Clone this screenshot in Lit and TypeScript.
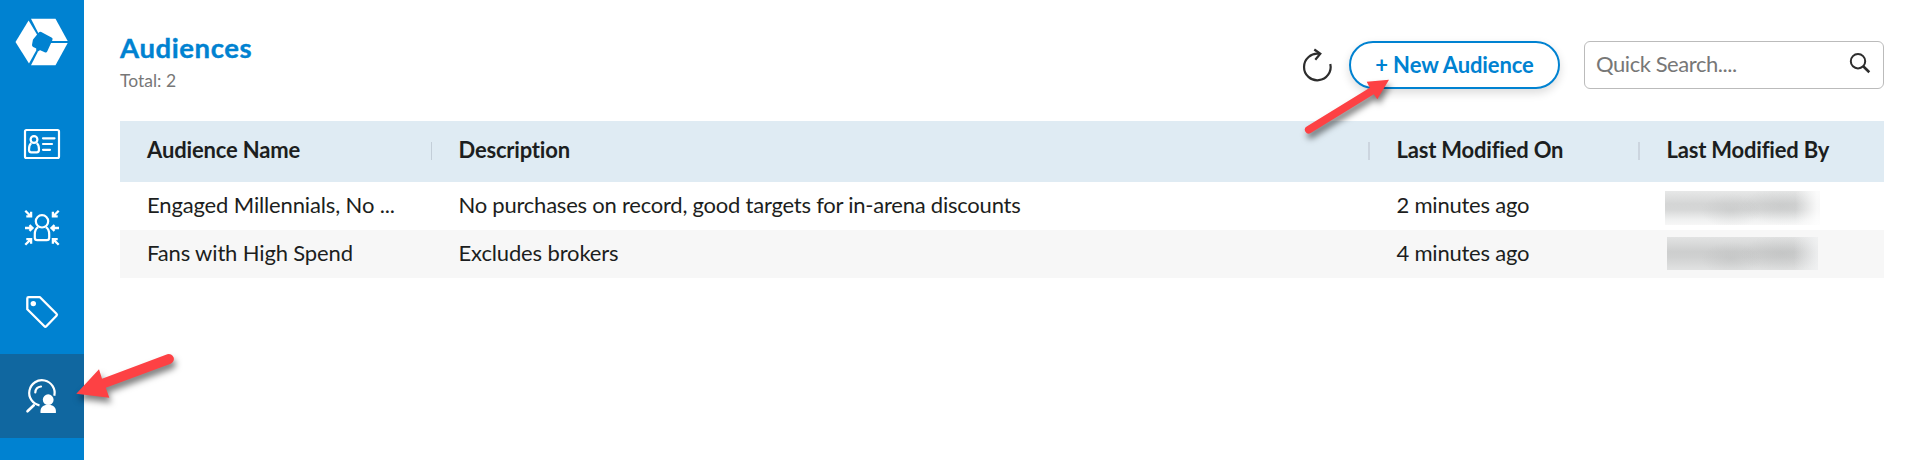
import { LitElement, html, css, svg } from "lit";
import { customElement } from "lit/decorators.js";

const columns = ["Audience Name", "Description", "Last Modified On", "Last Modified By"];

const rows = [
  { name: "Engaged Millennials, No ...", description: "No purchases on record, good targets for in-arena discounts", modified: "2 minutes ago" },
  { name: "Fans with High Spend", description: "Excludes brokers", modified: "4 minutes ago" },
];

const contactIcon = svg`
  <rect x="25" y="28" width="34" height="28" rx="1.5" stroke-width="2.2"/>
  <circle cx="34" cy="37.5" r="3.4" stroke-width="2.2"/>
  <path d="M31.300 41.200c-1.700 1.200-2.300 3.400-2.300 6.200 0 2 .7 2.900 2.200 2.900h5.600c1.500 0 2.200-.9 2.200-2.900 0-2.800-.6-5-2.300-6.200" stroke-width="2.2"/>
  <path d="M43 36.300h11.500M43 42h9M43 47.800h7" stroke-width="2.200" stroke-linecap="round"/>`;

const targetIcon = svg`
  <circle cx="42" cy="35.300" r="6.200" stroke-width="2.200"/>
  <path d="M38.200 41.300c-2.600 1.200-3.400 4-3.400 7.200v3.200c0 1.600.9 2.500 2.500 2.500h9.400c1.600 0 2.500-.9 2.500-2.500v-3.200c0-3.200-.8-6-3.400-7.200" stroke-width="2.200"/>
  <path d="M25.300 24.800l5.200 5.200M26.300 30.300h4.800v-4.600M58.700 24.800l-5.200 5.200M57.700 30.300h-4.800v-4.600M25.300 58.800l5.200-5.200M26.300 53.200h4.800v4.600M58.700 58.800l-5.200-5.200M57.700 53.200h-4.800v4.600M25 42h7M29.500 39.200l3 2.800-3 2.800M59 42h-7M54.500 39.200l-3 2.800 3 2.800" stroke-width="2.300"/>`;

const tagIcon = svg`
  <path d="M27.300 28.500c0-.8.500-1.300 1.300-1.300h11.400L56.500 43.800c.7.700.7 1.200 0 1.900L46.300 56.300c-.7.700-1.200.7-1.900 0L27.300 39.300z" stroke-width="2.300" stroke-linejoin="round"/>
  <circle cx="33.300" cy="33.600" r="2.700" fill="#fff" stroke="none"/>`;

const audienceIcon = svg`
  <path d="M54.300 41.800A12.700 12.700 0 1 0 39.500 51.400" stroke-width="2.200"/>
  <path d="M35.300 38.500c.2-3.200 2.200-5.700 5.700-6" stroke-width="2.200" stroke-linecap="round"/>
  <path d="M33.800 51.300l-6.300 6" stroke-width="2.600" stroke-linecap="round"/>
  <circle cx="48.200" cy="45.700" r="5.400" fill="#fff" stroke="none"/>
  <path d="M40.500 58.900v-1.700c0-3.800 2.800-6.400 7.700-6.400s7.700 2.600 7.700 6.400v1.700z" fill="#fff" stroke="none"/>`;

const icons = [contactIcon, targetIcon, tagIcon, audienceIcon];

@customElement("app-root")
export class AppRoot extends LitElement {
  static styles = css`
    :host { display: block; font-family: Lato, "Noto Sans", sans-serif; font-size: 22px; color: #1c1e20; }
    .app { display: flex; height: 460px; background: #fff; position: relative; overflow: hidden; }
    .sidebar { width: 84px; background: #0082d1; flex: none; }
    .logo { display: block; margin-bottom: 18px; }
    .item { display: block; width: 84px; height: 84px; fill: none; stroke: #fff; }
    .active { background: #1067a0; }
    .content { flex: 1; padding: 0 36px; }
    .header { display: flex; height: 121px; }
    .titles { flex: 1; padding-top: 31px; }
    .title { margin: 0; font-size: 27.5px; line-height: 33px; font-weight: 700; color: #0082d1; letter-spacing: 0.6px; -webkit-text-stroke: 0.4px #0082d1; }
    .total { font-size: 17.5px; line-height: 24px; padding-top: 5px; color: #777; }
    .tools { display: flex; padding-top: 41px; height: 48px; }
    .refresh { width: 48px; height: 48px; fill: none; stroke: #2d2d2d; stroke-width: 2.2; }
    .new { box-sizing: border-box; width: 211px; height: 48px; border: 2px solid #0082d1; border-radius: 24px; background: #fff; color: #0082d1; font: inherit; font-weight: 700; letter-spacing: -0.1px; padding: 0 0 2px; box-shadow: 0 4px 10px rgba(0, 0, 0, 0.14); margin-right: 24px; }
    .search { box-sizing: border-box; width: 300px; height: 48px; border: 1px solid #bbb; border-radius: 6px; display: flex; align-items: center; justify-content: space-between; padding: 0 12px 0 11px; color: #777; letter-spacing: -0.44px; }
    .placeholder { padding-bottom: 3px; }
    .glass { fill: none; stroke: #2d2d2d; stroke-width: 2; }
    .row { display: grid; grid-template-columns: 284px 937px 270px 1fr; height: 48px; align-items: center; padding-left: 27px; white-space: nowrap; }
    .cell { padding: 0 0 3px 27.5px; letter-spacing: -0.14px; }
    .cell:first-child { padding-left: 0; }
    .wide { letter-spacing: -0.23px; }
    .modified { padding-left: 28.5px; letter-spacing: -0.22px; }
    .head { height: 61px; background: #dfebf3; font-weight: 700; align-items: start; }
    .label { margin-top: 21px; height: 16px; line-height: 16px; padding: 0 0 2px 26.5px; border-left: 2px solid #ccd5df; letter-spacing: -0.2px; }
    .label:first-child { border: 0; padding-left: 0; letter-spacing: -0.15px; }
    .label:nth-child(2) { border-left: 1px solid #c3ced8; }
    .alt { background: #f7f7f7; }
    .redacted { align-self: start; width: 155px; height: 34px; margin: 9px 0 0 27px;
      background: linear-gradient(90deg, transparent 84%, rgba(255, 255, 255, 0.85) 98%), radial-gradient(ellipse 30px 17px at 66px 20px, rgba(175, 177, 177, 0.25), transparent), radial-gradient(ellipse 42px 19px at 117px 15px, rgba(175, 177, 177, 0.25), transparent), linear-gradient(#e7e8e8, #d4d5d5 38%, #d6d7d7 55%, #f0f1f1 85%, #f7f7f7); }
    .alt .redacted { width: 151px; height: 33px; margin: 7px 0 0 29px;
      background: linear-gradient(90deg, transparent 84%, rgba(243, 244, 245, 0.8) 99%), radial-gradient(ellipse 30px 17px at 64px 22px, rgba(170, 172, 172, 0.25), transparent), radial-gradient(ellipse 42px 19px at 115px 17px, rgba(170, 172, 172, 0.25), transparent), linear-gradient(#e2e3e3, #cdcece 45%, #d0d1d1 62%, #e1e2e2); }
    .arrows { position: absolute; left: 0; top: 0; pointer-events: none; }
    .arrow { fill: #fd4144; filter: drop-shadow(2px 5px 3px rgba(0, 0, 0, 0.5)); }
  `;

  render() {
    return html`<div class="app">
      <nav class="sidebar">
        <svg class="logo" width="84" height="84" viewBox="0 0 84 84">
          <path fill="#fff" d="M31 18.700H55.500L67.700 41H50L38.500 33.500Z"/>
          <path fill="#fff" d="M67.700 43L55.500 65.200H31L38 51.500L50 43Z"/>
          <path fill="#fff" d="M28.600 20.500L37 34.500L36.200 50.500L29 63.500L15.500 42Z"/>
          <path fill="#0082d1" stroke="#0082d1" stroke-width="4" stroke-linejoin="round" d="M40.300 33.800L50.600 39.200L45.500 50.500L34 45.200L34.800 40.500Z"/>
        </svg>
        ${icons.map((icon, n) => html`<svg class="item ${n === 3 ? "active" : ""}" viewBox="0 0 84 84">${icon}</svg>`)}
      </nav>
      <main class="content">
        <div class="header">
          <div class="titles">
            <h1 class="title">Audiences</h1>
            <div class="total">Total: 2</div>
          </div>
          <div class="tools">
            <svg class="refresh" viewBox="0 0 48 48">
              <path d="M29.300 23A13.300 13.300 0 1 1 18 12.800"/>
              <path d="M13.300 8.500L19.300 12.800L14.300 18.700"/>
            </svg>
            <button class="new">+ New Audience</button>
            <div class="search">
              <span class="placeholder">Quick Search....</span>
              <svg class="glass" width="22" height="24" viewBox="0 0 22 24">
                <circle cx="9" cy="8.200" r="7.200"/>
                <path d="M14.200 13.300L20.300 19.300" stroke-width="2.600"/>
              </svg>
            </div>
          </div>
        </div>
        <div class="row head">${columns.map((c) => html`<span class="label">${c}</span>`)}</div>
        ${rows.map((r, n) => html`<div class="row ${n ? "alt" : ""}">
          <span class="cell">${r.name}</span>
          <span class="cell ${r.description.length > 30 ? "wide" : ""}">${r.description}</span>
          <span class="cell modified">${r.modified}</span>
          <span class="redacted"></span>
        </div>`)}
      </main>
      <svg class="arrows" width="1920" height="460">
        <path class="arrow" d="M1389 79.700L1377.300 99.300L1373.800 94.200L1310.700 133A3.700 3.700 0 0 1 1306.700 126.500L1369.800 87.700L1366.700 81.700Z"/>
        <path class="arrow" d="M76.300 393.700L99 369.300L102 378.700L167.300 354.300A5 5 0 0 1 170.700 363.700L105.800 387.800L109.300 397.700Z"/>
      </svg>
    </div>`;
  }
}
